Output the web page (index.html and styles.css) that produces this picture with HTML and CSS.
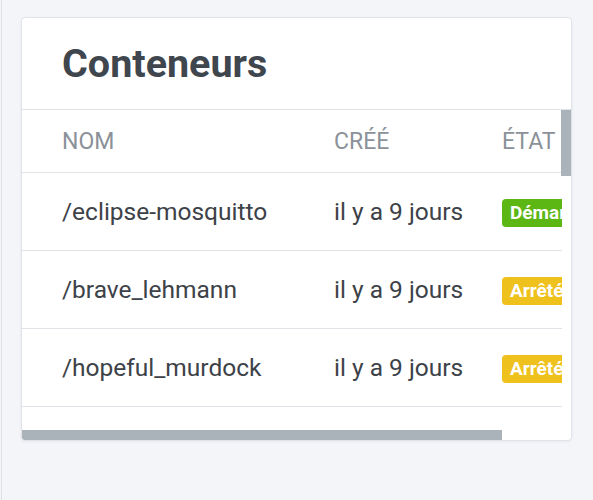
FILE: index.html
```html
<!DOCTYPE html>
<html lang="fr">
<head>
<meta charset="utf-8">
<title>Conteneurs</title>
<link rel="stylesheet" href="styles.css">
</head>
<body>
<div class="page">
  <section class="card">
    <header class="card-header">
      <h1 class="card-title">Conteneurs</h1>
    </header>
    <div class="table-area">
      <div class="table-viewport">
        <table class="table">
          <thead>
            <tr>
              <th class="col-name">NOM</th>
              <th class="col-created">CRÉÉ</th>
              <th class="col-state">ÉTAT</th>
            </tr>
          </thead>
          <tbody>
            <tr>
              <td class="col-name">/eclipse-mosquitto</td>
              <td class="col-created">il y a 9 jours</td>
              <td class="col-state"><span class="badge badge-green">Démarré</span></td>
            </tr>
            <tr>
              <td class="col-name">/brave_lehmann</td>
              <td class="col-created">il y a 9 jours</td>
              <td class="col-state"><span class="badge badge-yellow">Arrêté</span></td>
            </tr>
            <tr>
              <td class="col-name">/hopeful_murdock</td>
              <td class="col-created">il y a 9 jours</td>
              <td class="col-state"><span class="badge badge-yellow">Arrêté</span></td>
            </tr>
            <tr class="filler"><td colspan="3"></td></tr>
          </tbody>
        </table>
      </div>
      <div class="scroll-thumb scroll-thumb-v"></div>
      <div class="scroll-thumb scroll-thumb-h"></div>
    </div>
  </section>
</div>
</body>
</html>
```
FILE: styles.css
```css
html, body {
  margin: 0;
  padding: 0;
  background: #f4f5f9;
  font-family: Roboto, "Liberation Sans", Arial, sans-serif;
}

.page {
  margin-left: 1px;
  border-left: 1px solid #dde0e5;
  min-height: 500px;
  padding: 17px 21px 0 19px;
  box-sizing: border-box;
}

.card {
  background: #ffffff;
  border: 1px solid #e0e3e8;
  border-radius: 4px;
  box-shadow: 0 1px 3px rgba(30, 40, 60, 0.06);
  overflow: hidden;
}

.card-header {
  height: 91px;
  display: flex;
  align-items: center;
  padding-left: 40px;
  border-bottom: 1px solid #dfe2e6;
}

.card-title {
  margin: 0;
  font-size: 39.5px;
  font-weight: 700;
  color: #40464d;
  line-height: normal;
}

.table-area {
  position: relative;
  height: 330px;
}

.table-viewport {
  width: calc(100% - 9px);
  height: 320px;
  overflow: hidden;
}

.scroll-thumb {
  position: absolute;
  background: #aab2ba;
}

.scroll-thumb-v {
  top: 0;
  right: 0;
  width: 10px;
  height: 66px;
}

.scroll-thumb-h {
  left: 0;
  bottom: 0;
  width: 480px;
  height: 10px;
}

.table {
  border-collapse: collapse;
  width: 608px;
  table-layout: fixed;
}

.table th,
.table td {
  text-align: left;
  vertical-align: middle;
  padding: 0;
  white-space: nowrap;
}

.table th {
  height: 62px;
  font-size: 23px;
  font-weight: 400;
  color: #8b9198;
  border-bottom: 1px solid #dfe2e6;
}

.table td {
  height: 77px;
  font-size: 24.5px;
  color: #3d4248;
  border-bottom: 1px solid #dfe2e6;
}

.col-name {
  width: 272px;
  padding-left: 40px !important;
}

.col-created {
  width: 168px;
}

.col-state {
  width: 128px;
}

.badge {
  display: inline-block;
  height: 28px;
  line-height: 28px;
  padding: 0 8px;
  border-radius: 4px;
  font-size: 19px;
  font-weight: 700;
  color: #ffffff;
  vertical-align: middle;
}

.badge-green {
  background: #5cb715;
}

.badge-yellow {
  background: #efc11c;
}

.table tr.filler td {
  height: 1110px;
  border-bottom: none;
}
```
